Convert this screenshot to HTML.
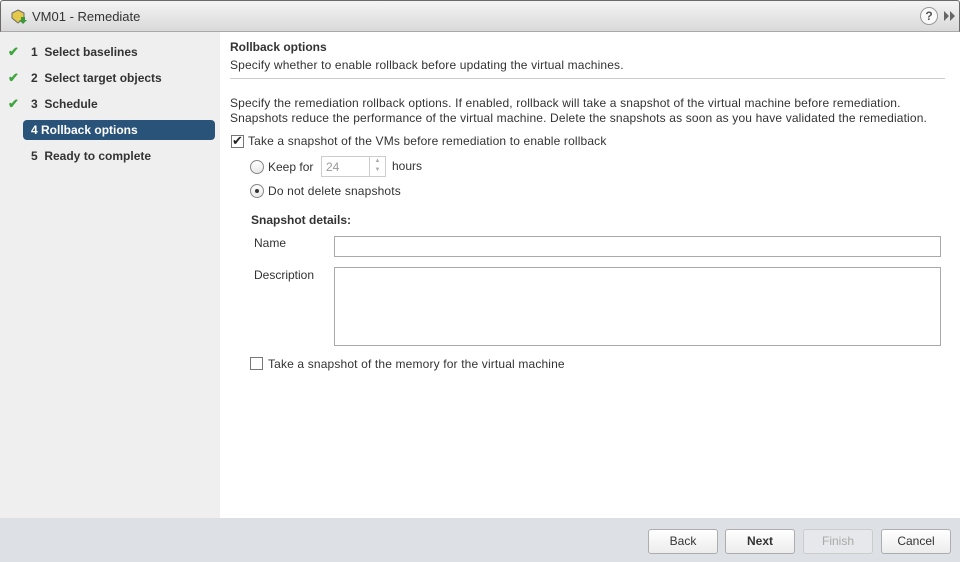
<!DOCTYPE html>
<html><head><style>
*{box-sizing:border-box;margin:0;padding:0}
body{width:960px;height:562px;overflow:hidden;font-family:"Liberation Sans",Arial,sans-serif;font-size:12px;color:#333;background:#fff;position:relative}
.abs{position:absolute}
.title{left:0;top:0;width:960px;height:32px;background:linear-gradient(#f4f4f4,#d9d9d9);border:1px solid #6a6a6a;border-bottom:1px solid #aaa;border-radius:3px 3px 0 0}
.side{left:0;top:32px;width:220px;height:486px;background:#efefef}
.step{position:absolute;left:0;width:220px;height:20px;font-weight:bold;font-size:12px;color:#333;line-height:20px}
.chk{position:absolute;left:8px;color:#3fa63f;font-size:13px}
.footer{left:0;top:518px;width:960px;height:44px;background:#dde1e6}
.btn{position:absolute;top:529px;width:70px;height:25px;border:1px solid #adadad;border-radius:3px;background:linear-gradient(#fff,#ececec);text-align:center;line-height:23px;font-size:12px;color:#333}
.cb{position:absolute;width:13px;height:13px;border:1px solid #777;background:#fff}
.rd{position:absolute;width:14px;height:14px;border:1px solid #888;border-radius:50%;background:linear-gradient(#fff,#e8e8e8)}
.inp{position:absolute;border:1px solid #a9a9a9;background:#fff}
.ls{letter-spacing:0.15px}
</style></head><body>
<div class="abs title">
<svg class="abs" style="left:10px;top:8px" width="16" height="16" viewBox="0 0 16 16"><path d="M7 1 L13 4 L13 9 L7 14 L1 9 L1 4Z" fill="#e3c84a" stroke="#6b6b6b"/><path d="M10 8 h4 v3 h2 l-4 4 l-4-4 h2z" fill="#3a9a3a"/></svg>
<div class="abs" style="left:31px;top:8px;font-size:13px;color:#333">VM01 - Remediate</div>
<div class="abs" style="left:919px;top:6px;width:18px;height:18px;border:1px solid #999;border-radius:50%;background:#fafafa;text-align:center;font-weight:bold;font-size:12px;line-height:16px;color:#555">?</div>
<svg class="abs" style="left:943px;top:10px" width="12" height="10" viewBox="0 0 12 10"><path d="M0 0 L5 5 L0 10Z M6 0 L11 5 L6 10Z" fill="#666"/></svg>
</div>
<div class="abs side"></div>
<div class="step" style="top:42px"><span class="chk">✔</span><span style="position:absolute;left:31px">1&nbsp; Select baselines</span></div>
<div class="step" style="top:68px"><span class="chk">✔</span><span style="position:absolute;left:31px">2&nbsp; Select target objects</span></div>
<div class="step" style="top:94px"><span class="chk">✔</span><span style="position:absolute;left:31px">3&nbsp; Schedule</span></div>
<div class="abs" style="left:23px;top:120px;width:192px;height:20px;background:#2a5379;border-radius:4px;color:#fff;font-weight:bold;line-height:20px;padding-left:8px">4 Rollback options</div>
<div class="step" style="top:146px"><span style="position:absolute;left:31px">5&nbsp; Ready to complete</span></div>

<div class="abs" style="left:230px;top:40px;font-weight:bold">Rollback options</div>
<div class="abs ls" style="left:230px;top:58px">Specify whether to enable rollback before updating the virtual machines.</div>
<div class="abs" style="left:230px;top:78px;width:715px;height:1px;background:#ccc"></div>
<div class="abs ls" style="left:230px;top:96px;line-height:15px">Specify the remediation rollback options. If enabled, rollback will take a snapshot of the virtual machine before remediation.<br>Snapshots reduce the performance of the virtual machine. Delete the snapshots as soon as you have validated the remediation.</div>
<div class="cb" style="left:231px;top:135px"><span style="position:absolute;left:0;top:-3px;font-size:13px;color:#222">✔</span></div>
<div class="abs ls" style="left:248px;top:134px">Take a snapshot of the VMs before remediation to enable rollback</div>
<div class="rd" style="left:250px;top:160px"></div>
<div class="abs" style="left:268px;top:160px">Keep for</div>
<div class="inp" style="left:321px;top:156px;width:65px;height:21px;border-color:#ccc"><span style="position:absolute;left:4px;top:3px;color:#999">24</span><div style="position:absolute;right:0;top:0;width:16px;height:19px;border-left:1px solid #ccc;font-size:6px;color:#aaa;text-align:center;line-height:9px">▲<br>▼</div></div>
<div class="abs" style="left:392px;top:159px">hours</div>
<div class="rd" style="left:250px;top:184px"><div style="position:absolute;left:4px;top:4px;width:4px;height:4px;border-radius:50%;background:#333"></div></div>
<div class="abs ls" style="left:268px;top:184px">Do not delete snapshots</div>
<div class="abs" style="left:251px;top:213px;font-weight:bold">Snapshot details:</div>
<div class="abs" style="left:254px;top:236px">Name</div>
<div class="inp" style="left:334px;top:236px;width:607px;height:21px"></div>
<div class="abs" style="left:254px;top:268px">Description</div>
<div class="inp" style="left:334px;top:267px;width:607px;height:79px"></div>
<div class="cb" style="left:250px;top:357px"></div>
<div class="abs ls" style="left:268px;top:357px">Take a snapshot of the memory for the virtual machine</div>

<div class="abs footer"></div>
<div class="btn" style="left:648px">Back</div>
<div class="btn" style="left:725px;font-weight:bold">Next</div>
<div class="btn" style="left:803px;color:#aaa;border-color:#ccc;background:#e6e8eb">Finish</div>
<div class="btn" style="left:881px">Cancel</div>
</body></html>
